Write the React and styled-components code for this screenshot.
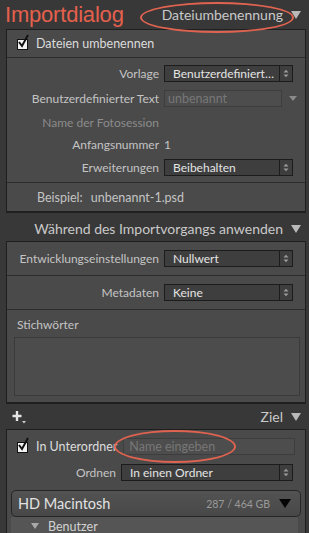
import React from "react";
import styled, { createGlobalStyle } from "styled-components";

const GlobalStyle = createGlobalStyle`
  body {
    margin: 0;
    background: #383838;
    font-family: Lato, "Open Sans", sans-serif;
  }
`;

const Page = styled.div`
  position: relative;
  width: 309px;
  height: 533px;
  overflow: hidden;
  background: #383838;
`;

const HeaderRow = styled.div`
  display: flex;
  align-items: center;
  justify-content: space-between;
  height: ${(p) => p.h || 28}px;
  padding: ${(p) => p.pt || 0}px 8px 0 ${(p) => p.pl || 5}px;
  box-sizing: border-box;
`;

const Title = styled.div`
  font-family: "Liberation Sans", sans-serif;
  font-size: 22px;
  color: #e5604d;
  letter-spacing: -0.2px;
`;

const HeaderRight = styled.div`
  display: flex;
  align-items: center;
  gap: 8px;
  font-size: 14px;
  color: #c9c9c9;
  margin-left: auto;
`;

const Tri = styled.span`
  width: 0;
  height: 0;
  border-left: ${(p) => p.s || 5}px solid transparent;
  border-right: ${(p) => p.s || 5}px solid transparent;
  border-top: ${(p) => (p.s || 5) * 1.6}px solid ${(p) => p.c || "#b9b9b9"};
`;

const Panel = styled.div`
  margin: 0 3px 0 6px;
  background: #4a4a4a;
  border: 1px solid #1f1f1f;
  border-bottom-width: 2px;
`;

const Section = styled.div`
  display: flex;
  flex-direction: column;
  padding: ${(p) => p.pad || "0"};
  border-top: ${(p) => (p.first ? "none" : "1px solid #2c2c2c")};
  min-height: ${(p) => p.h || 0}px;
  box-sizing: border-box;
  justify-content: ${(p) => (p.center ? "center" : "flex-start")};
`;

const CheckRow = styled.label`
  display: flex;
  align-items: center;
  gap: 8px;
  height: ${(p) => p.h || 27}px;
  padding-left: 10px;
  font-size: 12.5px;
  color: #dcdcdc;
  white-space: nowrap;
`;

const Box = styled.span`
  position: relative;
  width: 9px;
  height: 9px;
  background: #f2f2f2;
  border: 1px solid #111;
  flex: none;
  margin-top: 1px;
`;

const Tick = styled.svg`
  position: absolute;
  left: -1px;
  top: -6px;
`;

const FormRow = styled.div`
  display: grid;
  grid-template-columns: ${(p) => p.lw || 152}px 1fr;
  align-items: center;
  column-gap: 5px;
  height: ${(p) => p.h || 24}px;
  padding-right: ${(p) => p.pr || 12}px;
`;

const Label = styled.div`
  text-align: right;
  font-size: 12px;
  color: ${(p) => (p.dim ? "#8c8c8c" : "#c4c4c4")};
  white-space: nowrap;
`;

const Value = styled.div`
  font-size: 12px;
  color: #c4c4c4;
`;

const Select = styled.div`
  display: flex;
  align-items: center;
  height: 17px;
  background: #3e3e3e;
  border: 1px solid #1c1c1c;
  box-sizing: border-box;
  font-size: 12px;
  color: #e4e4e4;
  padding-left: 8px;
  overflow: hidden;
  white-space: nowrap;
`;

const SelText = styled.span`
  flex: 1;
  overflow: hidden;
`;

const Stepper = styled.span`
  flex: none;
  width: 12px;
  height: 100%;
  border-left: 1px solid #1c1c1c;
  display: flex;
  align-items: center;
  justify-content: center;
  margin-left: 2px;
`;

const InputWrap = styled.div`
  display: flex;
  align-items: center;
  gap: 7px;
`;

const TextInput = styled.div`
  flex: 1;
  height: 17px;
  background: #4d4d4d;
  border: 1px solid #3d3d3d;
  box-sizing: border-box;
  font-size: 12.5px;
  color: #777;
  padding-left: ${(p) => p.pl || 3}px;
  margin-left: ${(p) => p.ml || 0}px;
  line-height: 15px;
  white-space: nowrap;
`;

const SmallTri = styled.span`
  width: 0;
  height: 0;
  border-left: 4px solid transparent;
  border-right: 4px solid transparent;
  border-top: 5px solid #8a8a8a;
`;

const Example = styled.div`
  font-size: 12.5px;
  color: #c4c4c4;
  padding-left: 30px;
  display: flex;
  gap: 8px;
`;

const FieldLabel = styled.div`
  font-size: 12px;
  line-height: 15px;
  color: #c4c4c4;
  padding: 0 0 5px 10px;
`;

const TextArea = styled.div`
  height: 57px;
  margin: 0 5px 0 7px;
  background: #4c4c4c;
  border: 1px solid #3a3a3a;
`;

const PlusIcon = styled.svg`
  display: block;
`;

const UnterRow = styled.div`
  display: flex;
  align-items: center;
  height: 31px;
  padding: 2px 10px 0 0;
  box-sizing: border-box;
`;

const DriveBar = styled.div`
  display: flex;
  align-items: center;
  height: 27px;
  margin: 7px 4px 0 4px;
  padding: 0 9px 0 6px;
  border: 1px solid #262626;
  border-radius: 5px;
  background: linear-gradient(#535353, #484848);
  box-sizing: border-box;
`;

const DriveName = styled.span`
  flex: 1;
  font-size: 14.5px;
  color: #e2e2e2;
`;

const DriveSize = styled.span`
  font-size: 10.5px;
  color: #9a9a9a;
  margin-right: 9px;
`;

const FolderRow = styled.div`
  display: flex;
  align-items: center;
  gap: 9px;
  height: 18px;
  margin: 0 7px 0 4px;
  padding-left: 20px;
  background: #555;
  font-size: 12.5px;
  color: #d2d2d2;
`;

const Ellipse = styled.div`
  position: absolute;
  border: 2px solid #df6350;
  border-radius: 50%;
  pointer-events: none;
`;

const Check = ({ children, h }) => (
  <CheckRow h={h}>
    <Box>
      <Tick width="13" height="14" viewBox="0 0 13 14">
        <path d="M2 8 L5 12 L11 1" fill="none" stroke="#111" strokeWidth="2" />
      </Tick>
    </Box>
    {children}
  </CheckRow>
);

const Popup = ({ children }) => (
  <Select>
    <SelText>{children}</SelText>
    <Stepper>
      <svg width="6" height="9" viewBox="0 0 6 9">
        <path d="M0.5 3.5 L3 0.8 L5.5 3.5 Z M0.5 5.5 L3 8.2 L5.5 5.5 Z" fill="#9a9a9a" />
      </svg>
    </Stepper>
  </Select>
);

export default function App() {
  return (
    <Page>
      <GlobalStyle />
      <HeaderRow h={29}>
        <Title>Importdialog</Title>
        <HeaderRight>
          Dateiumbenennung
          <Tri />
        </HeaderRight>
      </HeaderRow>

      <Panel>
        <Section first>
          <Check h={27}>Dateien umbenennen</Check>
        </Section>
        <Section pad="3px 0 2px">
          <FormRow h={24}>
            <Label>Vorlage</Label>
            <Popup>Benutzerdefiniert…</Popup>
          </FormRow>
          <FormRow h={26} pr={8}>
            <Label>Benutzerdefinierter Text</Label>
            <InputWrap>
              <TextInput>unbenannt</TextInput>
              <SmallTri />
            </InputWrap>
          </FormRow>
          <FormRow h={23}>
            <Label dim>Name der Fotosession</Label>
            <span />
          </FormRow>
          <FormRow h={21}>
            <Label>Anfangsnummer</Label>
            <Value>1</Value>
          </FormRow>
          <FormRow h={25}>
            <Label>Erweiterungen</Label>
            <Popup>Beibehalten</Popup>
          </FormRow>
        </Section>
        <Section h={29} center>
          <Example>
            <span>Beispiel:</span>
            <span>unbenannt-1.psd</span>
          </Example>
        </Section>
      </Panel>

      <HeaderRow h={28} pt={3}>
        <HeaderRight>
          Während des Importvorgangs anwenden
          <Tri />
        </HeaderRight>
      </HeaderRow>

      <Panel>
        <Section first h={33} center>
          <FormRow h={24}>
            <Label>Entwicklungseinstellungen</Label>
            <Popup>Nullwert</Popup>
          </FormRow>
        </Section>
        <Section h={34} center>
          <FormRow h={24}>
            <Label>Metadaten</Label>
            <Popup>Keine</Popup>
          </FormRow>
        </Section>
        <Section pad="7px 0 6px">
          <FieldLabel>Stichwörter</FieldLabel>
          <TextArea />
        </Section>
      </Panel>

      <HeaderRow h={25} pl={12}>
        <PlusIcon width="16" height="14" viewBox="0 0 16 14">
          <path d="M5 1 V11 M0.5 6 H9.5" stroke="#e6e6e6" strokeWidth="2.4" />
          <path d="M10 11 L14 11 L12 13.5 Z" fill="#cfcfcf" />
        </PlusIcon>
        <HeaderRight>
          Ziel
          <Tri />
        </HeaderRight>
      </HeaderRow>

      <Panel>
        <Section first>
          <UnterRow>
            <Check h={28}>In Unterordner</Check>
            <TextInput ml={6} pl={5}>Name eingeben</TextInput>
          </UnterRow>
          <FormRow lw={109} h={22} pr={12}>
            <Label>Ordnen</Label>
            <Popup>In einen Ordner</Popup>
          </FormRow>
          <DriveBar>
            <DriveName>HD Macintosh</DriveName>
            <DriveSize>287 / 464 GB</DriveSize>
            <Tri s={6} c="#050505" />
          </DriveBar>
          <FolderRow>
            <Tri s={4} c="#a8a8a8" />
            Benutzer
          </FolderRow>
        </Section>
      </Panel>

      <Ellipse style={{ left: 140, top: 2, width: 150, height: 27 }} />
      <Ellipse style={{ left: 114, top: 430, width: 118, height: 29 }} />
    </Page>
  );
}
